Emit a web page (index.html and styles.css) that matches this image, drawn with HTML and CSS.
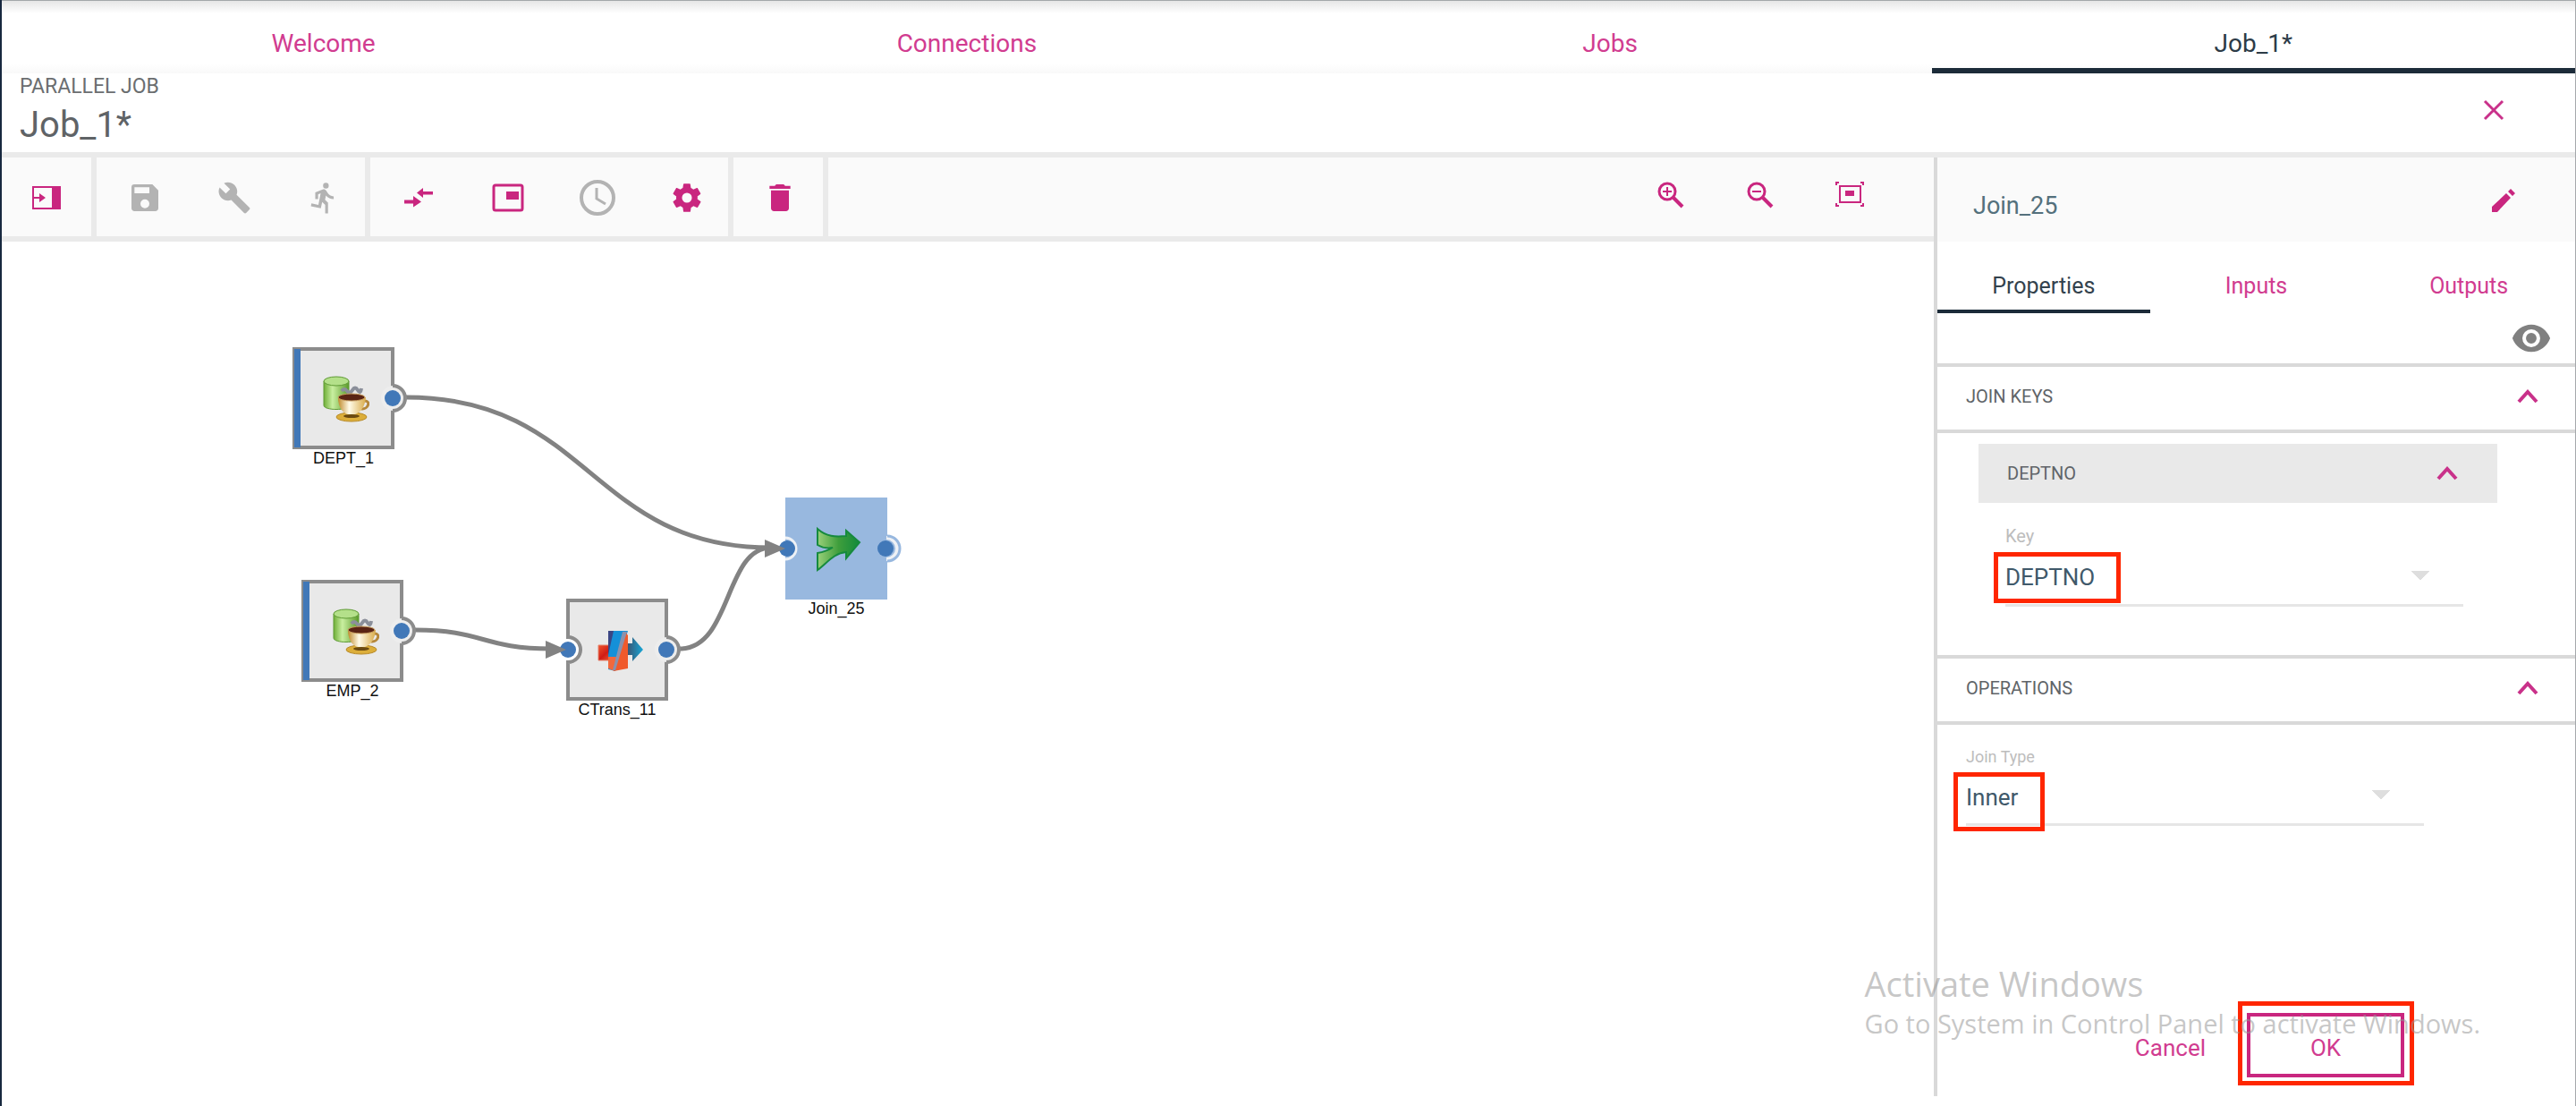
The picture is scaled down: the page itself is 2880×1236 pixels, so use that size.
FILE: index.html
```html
<!DOCTYPE html>
<html lang="en">
<head>
<meta charset="utf-8">
<title>Job_1*</title>
<link rel="stylesheet" href="styles.css">
</head>
<body>
<svg class="defs" aria-hidden="true">
  <defs>
    <linearGradient id="green" x1="0" x2="1" y1="0" y2="0"><stop offset="0" stop-color="#6fae38"/><stop offset=".35" stop-color="#c9efa0"/><stop offset="1" stop-color="#5a9a2a"/></linearGradient>
    <linearGradient id="cream" x1="0" x2="1" y1="0" y2="0"><stop offset="0" stop-color="#c08a2c"/><stop offset=".4" stop-color="#fffbe8"/><stop offset="1" stop-color="#d9ab4a"/></linearGradient>
    <linearGradient id="leaf" x1="0" x2="1" y1="0" y2="0"><stop offset="0" stop-color="#9ad07a"/><stop offset=".5" stop-color="#3f9e3c"/><stop offset="1" stop-color="#128a3c"/></linearGradient>
    <linearGradient id="teal" x1="0" x2="1" y1="0" y2="0"><stop offset="0" stop-color="#3d4a66"/><stop offset="1" stop-color="#16a6d6"/></linearGradient>
    <linearGradient id="red" x1="0" x2="1" y1="0" y2="1"><stop offset="0" stop-color="#f0542c"/><stop offset=".5" stop-color="#d01c16"/><stop offset="1" stop-color="#f26a3c"/></linearGradient>
    <symbol id="chevron" viewBox="0 0 24 16"><path d="M2 14 12 3 22 14" fill="none" stroke="#c9318a" stroke-width="4"/></symbol>
    <symbol id="jdbc" viewBox="0 0 52 52">
      <path d="M1 6v27c0 6 28 6 28 0V6z" fill="url(#green)" stroke="#5f9a35"/>
      <ellipse cx="15" cy="6" rx="14" ry="5" fill="#b4e08a" stroke="#5f9a35"/>
      <path d="M21 17q3-4 6 0t6-1 6 0 4-2" fill="none" stroke="#8b8f9a" stroke-width="4"/>
      <ellipse cx="32" cy="46" rx="17" ry="5" fill="#dcae3a" stroke="#b88a28"/>
      <ellipse cx="32" cy="45" rx="9" ry="2" fill="#6b4a10"/>
      <path d="M46 28c8-1 5 10-3 9" fill="none" stroke="#b5873a" stroke-width="3"/>
      <path d="M17 24c0 12 6 18 11 19h8c6-2 11-8 12-19z" fill="url(#cream)"/>
      <ellipse cx="32" cy="24" rx="15" ry="4" fill="#5a2414" stroke="#caa060"/>
    </symbol>
  </defs>
</svg>

<nav class="tabs">
  <a class="tab" href="#welcome">Welcome</a>
  <a class="tab" href="#connections">Connections</a>
  <a class="tab" href="#jobs">Jobs</a>
  <a class="tab tab-active" href="#job" aria-current="page">Job_1*</a>
</nav>

<header class="job-header">
  <div>
    <p class="job-kind">PARALLEL JOB</p>
    <h1 class="job-name">Job_1*</h1>
  </div>
  <button class="icon-button close" aria-label="Close"><svg width="24" height="24" viewBox="0 0 24 24"><path d="M2 2 22 22M22 2 2 22" stroke="#c9318a" stroke-width="3"/></svg></button>
</header>

<div class="workspace">
  <main class="editor">
    <div class="toolbar">
      <div class="group group-tight">
        <button class="icon-button" aria-label="Toggle palette"><svg width="34" height="28" viewBox="0 0 34 28"><path d="M2 2h30v24H2z" fill="none" stroke="#c9267f" stroke-width="2"/><path d="M23 1h10v26H23zM2 13h7V9l7 5-7 5v-4H2z" fill="#c9267f"/></svg></button>
      </div>
      <div class="group">
        <button class="icon-button" aria-label="Save" disabled><svg width="40" height="40" viewBox="0 0 24 24"><path fill="#b3b3b3" d="M17 3H5a2 2 0 0 0-2 2v14c0 1.100.9 2 2 2h14c1.100 0 2-.9 2-2V7zm-5 16a3 3 0 1 1 0-6 3 3 0 0 1 0 6zm3-10H5V5h10z"/></svg></button>
        <button class="icon-button" aria-label="Compile" disabled><svg width="38" height="38" viewBox="0 0 24 24"><path fill="#b3b3b3" d="m22.700 19-9.100-9.100c.9-2.300.4-5-1.500-6.900-2-2-5-2.400-7.400-1.300L9 6 6 9 1.600 4.700C.4 7.100.9 10.100 2.900 12.100c1.900 1.900 4.600 2.400 6.900 1.500l9.100 9.100c.4.4 1 .4 1.400 0l2.300-2.300c.5-.4.5-1.100.1-1.400z"/></svg></button>
        <button class="icon-button" aria-label="Run" disabled><svg width="38" height="38" viewBox="0 0 24 24"><path fill="#b3b3b3" d="M13.490 5.480a2 2 0 1 0 0-4 2 2 0 0 0 0 4zm-3.600 13.900 1-4.400 2.100 2v6h2v-7.500l-2.100-2 .6-3a7.300 7.300 0 0 0 5.500 2.500v-2c-1.900 0-3.500-1-4.300-2.400l-1-1.600c-.4-.6-1-1-1.700-1-.3 0-.5.1-.8.1l-5.200 2.200v4.700h2v-3.400l1.800-.7-1.600 8.100-4.900-1-.4 2z"/></svg></button>
      </div>
      <div class="group">
        <button class="icon-button" aria-label="Arrange links"><svg width="34" height="24" viewBox="0 0 34 24"><path fill="#c9267f" d="M1 14.500h10V10l9 6.500-9 6V18.500H1zM33 5H22V1l-7 5.500 7 5.500V8.500h11z"/></svg></button>
        <button class="icon-button" aria-label="Overview"><svg width="36" height="32" viewBox="0 0 36 32"><rect x="2" y="2" width="32" height="28" rx="2" fill="none" stroke="#c9267f" stroke-width="3"/><path d="M16 9h14v9H16z" fill="#c9267f"/></svg></button>
        <button class="icon-button" aria-label="Schedule" disabled><svg width="42" height="42" viewBox="0 0 42 42"><circle cx="21" cy="21" r="18" fill="none" stroke="#b3b3b3" stroke-width="4"/><path d="M20 10v12l10 6" fill="none" stroke="#b3b3b3" stroke-width="3"/></svg></button>
        <button class="icon-button" aria-label="Settings"><svg width="38" height="38" viewBox="0 0 24 24"><path fill="#c9267f" fill-rule="evenodd" d="M19.400 13c0-.3.100-.6.100-1s0-.7-.1-1l2.100-1.600c.2-.2.200-.4.100-.6l-2-3.500c-.1-.2-.4-.3-.6-.2l-2.500 1c-.5-.4-1.100-.7-1.700-1l-.4-2.600c0-.3-.2-.5-.4-.5h-4c-.2 0-.4.2-.5.4l-.4 2.700c-.6.200-1.100.6-1.700 1l-2.500-1c-.2-.1-.5 0-.6.200l-2 3.500c-.1.200-.1.500.1.600L4.500 11c0 .3-.1.700-.1 1s0 .7.1 1l-2.100 1.600c-.2.200-.2.400-.1.600l2 3.500c.1.200.4.300.6.200l2.500-1c.5.400 1.100.7 1.700 1l.4 2.700c0 .200.200.4.500.4h4c.2 0 .5-.2.500-.4l.4-2.700c.6-.2 1.100-.6 1.700-1l2.500 1c.2.100.5 0 .6-.2l2-3.500c.1-.2.1-.5-.1-.6zM12 15.500a3.500 3.500 0 1 1 0-7 3.500 3.500 0 0 1 0 7z"/></svg></button>
      </div>
      <div class="group group-delete">
        <button class="icon-button" aria-label="Delete"><svg width="40" height="40" viewBox="0 0 24 24"><path fill="#c9267f" d="M6 19c0 1.100.9 2 2 2h8c1.100 0 2-.9 2-2V7H6zM19 4h-3.500l-1-1h-5l-1 1H5v2h14z"/></svg></button>
      </div>
      <div class="zoom-tools">
        <button class="icon-button" aria-label="Zoom in"><svg width="30" height="30" viewBox="0 0 30 30"><g fill="none" stroke="#c9267f"><circle cx="11" cy="11" r="9" stroke-width="3"/><path d="m18 18 10 10" stroke-width="4"/><path d="M6 11h10M11 6v10" stroke-width="2"/></g></svg></button>
        <button class="icon-button" aria-label="Zoom out"><svg width="30" height="30" viewBox="0 0 30 30"><g fill="none" stroke="#c9267f"><circle cx="11" cy="11" r="9" stroke-width="3"/><path d="m18 18 10 10" stroke-width="4"/><path d="M6 11h10" stroke-width="2"/></g></svg></button>
        <button class="icon-button" aria-label="Fit to window"><svg width="34" height="34" viewBox="0 0 34 34"><g fill="none" stroke="#c9267f" stroke-width="2"><path d="M6 7h23v18H6zM2 6V3h3M29 3h3v3M2 26v3h3M29 29h3v-3"/></g><path d="M12 12h10v6H12z" fill="#c9267f"/></svg></button>
      </div>
    </div>

    <div class="canvas">
      <svg class="links" width="1100" height="600" viewBox="2 270 1100 600">
        <g fill="none" stroke="#828282" stroke-width="5">
          <path d="M454 444C660 444 660 612 862 612"/>
          <path d="M464 704C540 704 540 725 616 725"/>
          <path d="M760 725C818 725 810 612 862 612"/>
        </g>
      </svg>
      <div class="node node-dept">
        <svg width="136" height="114" viewBox="0 0 136 114"><path d="M2 2h110v110H2z" fill="#e9e9e9" stroke="#8c8c8c" stroke-width="4"/><path d="M2 2h7v110H2z" fill="#4178b8"/><circle cx="113" cy="57" r="14" fill="#ededed"/><path d="M112 43a14 14 0 0 1 0 28" fill="none" stroke="#8c8c8c" stroke-width="4"/><circle cx="112" cy="57" r="9" fill="#4178b8"/><use href="#jdbc" x="34" y="32" width="52" height="52"/></svg>
        <span class="node-label">DEPT_1</span>
      </div>
      <div class="node node-emp">
        <svg width="136" height="114" viewBox="0 0 136 114"><path d="M2 2h110v110H2z" fill="#e9e9e9" stroke="#8c8c8c" stroke-width="4"/><path d="M2 2h7v110H2z" fill="#4178b8"/><circle cx="113" cy="57" r="14" fill="#ededed"/><path d="M112 43a14 14 0 0 1 0 28" fill="none" stroke="#8c8c8c" stroke-width="4"/><circle cx="112" cy="57" r="9" fill="#4178b8"/><use href="#jdbc" x="35" y="32" width="52" height="52"/></svg>
        <span class="node-label">EMP_2</span>
      </div>
      <div class="node node-ctrans">
        <svg width="136" height="114" viewBox="0 0 136 114"><path d="M2 2h110v110H2V71a14 14 0 0 0 0-28z" fill="#e9e9e9" stroke="#8c8c8c" stroke-width="4"/><circle cx="113" cy="57" r="14" fill="#ededed"/><path d="M112 43a14 14 0 0 1 0 28" fill="none" stroke="#8c8c8c" stroke-width="4"/><circle cx="2" cy="57" r="9" fill="#4178b8"/><circle cx="112" cy="57" r="9" fill="#4178b8"/>
          <path d="M-23 47 0 57 -23 67z" fill="#828282"/>
          <path d="M66 50h8v-7l12 14-12 13v-7h-8z" fill="url(#teal)"/><path d="M36 52h18v17H36z" fill="url(#red)" stroke="#e3836c"/><path d="M47 36h22l-14 45-8-2z" fill="#1590d8"/><path d="M47 36h6l-6 27z" fill="#3b4684"/><path d="M47 65h11l-4 16-7-3z" fill="#f2683c"/><path d="M66 37l3 4v37l-16 3z" fill="#f05a2c"/><path d="M63 37h5L55 80h-3z" fill="#8b91ac"/></svg>
        <span class="node-label">CTrans_11</span>
      </div>
      <div class="node node-join">
        <svg width="136" height="114" viewBox="0 0 136 114"><path d="M0 0h114v114H0z" fill="#98b8df"/><path d="M0 45a12 12 0 0 1 0 24" fill="#98b8df" stroke="#eef1f5" stroke-width="3"/><path d="M113 45a12 12 0 0 1 0 24" fill="#98b8df" stroke="#eef1f5" stroke-width="4"/><path d="M114 43a14 14 0 0 1 0 28" fill="none" stroke="#98b8df" stroke-width="3"/><circle cx="2" cy="57" r="9" fill="#4178b8"/><circle cx="112" cy="57" r="9" fill="#4178b8"/><path d="M-23 47 0 57 -23 67z" fill="#828282"/><path d="M36 35c10 9 20 9 32 8v-6l15 13-15 18v-7C54 62 46 74 36 81V62c6-1 12-3 17-6-6 1-12 0-17-3z" fill="url(#leaf)" stroke="#168a3e" stroke-width="2"/></svg>
        <span class="node-label">Join_25</span>
      </div>
    </div>
  </main>

  <aside class="panel">
    <div class="panel-header">
      <h2 class="panel-title">Join_25</h2>
      <button class="icon-button edit" aria-label="Rename"><svg width="28" height="28" viewBox="0 0 28 28"><path fill="#c9267f" d="M1 21 17 6l5 5L7 27H1zM19 4l3-3 5 5-3 3z"/></svg></button>
    </div>
    <nav class="panel-tabs">
      <a class="panel-tab panel-tab-active" href="#properties">Properties</a>
      <a class="panel-tab" href="#inputs">Inputs</a>
      <a class="panel-tab" href="#outputs">Outputs</a>
    </nav>
    <div class="view-row">
      <button class="icon-button view" aria-label="Show all"><svg width="46" height="46" viewBox="0 0 24 24"><path fill="#808080" d="M12 4C7 4 2.700 7.300 1 12c1.700 4.700 6 8 11 8s9.300-3.300 11-8c-1.700-4.700-6-8-11-8zm0 13.200a5.200 5.200 0 1 1 0-10.400 5.200 5.200 0 0 1 0 10.400zm0-8.300a3.100 3.100 0 1 0 0 6.200 3.100 3.100 0 0 0 0-6.200z"/></svg></button>
    </div>

    <section class="section section-keys">
      <h3 class="section-head"><button class="section-button">JOIN KEYS<svg width="24" height="16"><use href="#chevron"/></svg></button></h3>
      <div class="section-body">
        <button class="key-bar">DEPTNO<svg width="24" height="16"><use href="#chevron"/></svg></button>
        <div class="field field-key">
          <label class="field-label" for="key">Key</label>
          <select class="field-select" id="key"><option>DEPTNO</option></select>
          <span class="mark mark-key"></span>
        </div>
      </div>
    </section>

    <section class="section">
      <h3 class="section-head"><button class="section-button">OPERATIONS<svg width="24" height="16"><use href="#chevron"/></svg></button></h3>
      <div class="section-body">
        <div class="field field-type">
          <label class="field-label field-label-small" for="join-type">Join Type</label>
          <select class="field-select" id="join-type"><option>Inner</option></select>
          <span class="mark mark-type"></span>
        </div>
      </div>
    </section>

    <div class="actions">
      <button class="cancel">Cancel</button>
      <div class="ok-wrap">
        <button class="ok">OK</button>
        <span class="mark mark-ok"></span>
      </div>
    </div>
  </aside>
</div>

<div class="watermark">
  <p class="watermark-title">Activate Windows</p>
  <p class="watermark-text">Go to System in Control Panel to activate Windows.</p>
</div>
</body>
</html>
```
FILE: styles.css
```css
* {
  box-sizing: border-box;
}

body {
  display: flex;
  flex-direction: column;
  position: relative;
  min-height: 100vh;
  margin: 0;
  border-left: 2px solid #17283f;
  border-right: 1px solid #a5a8ab;
  background: #fff;
  color: #5f6366;
  font-family: Roboto, "Liberation Sans", sans-serif;
  font-size: 26px;
}

h1, h2, h3, p {
  margin: 0;
  font-weight: 400;
}

button {
  padding: 0;
  border: 0;
  background: none;
  color: inherit;
  font: inherit;
}

svg {
  display: block;
}

.defs {
  position: absolute;
  width: 0;
  height: 0;
}

/* Top navigation */
.tabs {
  display: grid;
  grid-template-columns: repeat(4, 1fr);
  height: 82px;
  border-top: 1px solid #a3a7aa;
  background: linear-gradient(#e6e6e6, #fff 14px, #fff 70px, #f9f9f9);
}

.tab {
  padding-top: 21px;
  border-bottom: 6px solid transparent;
  color: #d13c90;
  font-size: 28px;
  line-height: 54px;
  text-align: center;
  text-decoration: none;
}

.tab-active {
  border-bottom-color: #1c2b39;
  color: #2c3b47;
}

.job-header {
  display: flex;
  justify-content: space-between;
  height: 88px;
  padding: 0 79px 0 20px;
}

.job-kind {
  padding-top: 2px;
  color: #6b6e70;
  font-size: 23px;
  line-height: 26px;
}

.job-name {
  font-size: 40px;
  line-height: 60px;
}

.close {
  align-self: center;
  padding-bottom: 6px;
}

/* Editor and toolbar */
.workspace {
  display: flex;
  flex: 1;
  border-top: 6px solid #eaeaea;
}

.editor {
  display: flex;
  flex: 1;
  flex-direction: column;
  min-width: 0;
}

.toolbar {
  display: flex;
  height: 94px;
  border-bottom: 6px solid #eaeaea;
  background: #fafafa;
}

.group {
  display: flex;
  border-right: 6px solid #eaeaea;
}

.toolbar .icon-button {
  display: grid;
  place-items: center;
  width: 100px;
  padding: 2px 0 0 8px;
}

.toolbar .group-tight .icon-button {
  padding-left: 0;
}

.toolbar .group-delete .icon-button {
  padding-left: 4px;
}

.zoom-tools {
  display: flex;
  margin-left: auto;
  padding: 0 48px 6px 0;
}

/* Job diagram */
.canvas {
  position: relative;
  flex: 1;
}

.links {
  position: absolute;
  top: 0;
  left: 0;
}

.node {
  position: absolute;
  width: 114px;
}

.node svg {
  overflow: visible;
}

.node-dept { left: 325px; top: 118px; }
.node-emp { left: 335px; top: 378px; }
.node-ctrans { left: 631px; top: 399px; }
.node-join { left: 876px; top: 286px; }

.node-label {
  display: block;
  color: #111;
  font-family: "Liberation Sans", sans-serif;
  font-size: 18px;
  line-height: 20px;
  text-align: center;
}

/* Properties panel */
.panel {
  display: flex;
  flex: 0 0 717px;
  flex-direction: column;
  margin-bottom: 11px;
  border-left: 4px solid #d9d9d9;
}

.panel-header {
  display: flex;
  align-items: center;
  justify-content: space-between;
  height: 94px;
  padding: 14px 66px 0 40px;
  background: #fafafa;
}

.panel-title {
  color: #54707c;
  font-size: 27px;
}

.edit {
  padding-bottom: 12px;
}

.panel-tabs {
  display: grid;
  grid-template-columns: repeat(3, 1fr);
}

.panel-tab {
  padding-top: 24px;
  border-bottom: 4px solid transparent;
  color: #d13c90;
  font-size: 25px;
  line-height: 52px;
  text-align: center;
  text-decoration: none;
}

.panel-tab-active {
  border-bottom-color: #1c2b39;
  color: #33424d;
}

.view-row {
  display: flex;
  align-items: flex-start;
  justify-content: flex-end;
  height: 56px;
  padding: 5px 26px 0 0;
}

.section {
  border-top: 4px solid #d9d9d9;
}

.section-keys {
  height: 326px;
}

.section-button {
  display: flex;
  align-items: center;
  justify-content: space-between;
  width: 100%;
  height: 74px;
  padding: 0 41px 4px 32px;
  border-bottom: 4px solid #d9d9d9;
  color: #606468;
}

.section-head,
.key-bar {
  font-size: 20px;
}

.key-bar {
  display: flex;
  align-items: center;
  justify-content: space-between;
  width: 580px;
  height: 66px;
  margin: 12px 0 0 46px;
  padding: 0 44px 0 32px;
  background: #e9e9e9;
  color: #606468;
}

.field {
  position: relative;
  width: 512px;
}

.field-key {
  margin: 24px 0 0 76px;
}

.field-type {
  margin: 23px 0 0 32px;
}

.field-label {
  display: block;
  color: #bdbdbd;
  font-size: 20px;
  line-height: 26px;
}

.field-label-small {
  font-size: 18px;
}

.field-select {
  display: block;
  width: 100%;
  height: 66px;
  padding: 2px 0 0;
  appearance: none;
  border: 0;
  border-bottom: 3px solid #e6e6e6;
  border-radius: 0;
  background: linear-gradient(to bottom left, #dedede 50%, transparent 52%) 454px 26px / 10px 10px no-repeat,
    linear-gradient(to bottom right, #dedede 50%, transparent 52%) 464px 26px / 10px 10px no-repeat;
  color: #40596a;
  font: inherit;
}

.field-type .field-select {
  height: 64px;
  background-position: 454px 24px, 464px 24px;
}

/* Highlight frames around the chosen values */
.mark {
  position: absolute;
  border: 5px solid #ff2600;
  pointer-events: none;
}

.mark-key {
  top: 31px;
  left: -13px;
  width: 142px;
  height: 57px;
}

.mark-type {
  top: 30px;
  left: -14px;
  width: 102px;
  height: 66px;
}

.mark-ok {
  inset: -13px -11px -9px -10px;
}

.actions {
  display: flex;
  gap: 46px;
  justify-content: flex-end;
  margin-top: auto;
  padding: 0 191px 21px 0;
}

.cancel,
.ok {
  padding-top: 6px;
  color: #d13c90;
}

.ok-wrap {
  position: relative;
}

.ok {
  width: 176px;
  height: 72px;
  border: 4px solid #c9267f;
}

.watermark {
  position: absolute;
  right: 106px;
  bottom: 72px;
  color: rgba(150, 150, 150, 0.55);
  font-family: "Open Sans", "Noto Sans", sans-serif;
  pointer-events: none;
}

.watermark-title {
  font-size: 38px;
  line-height: 50px;
}

.watermark-text {
  font-size: 29px;
  line-height: 40px;
}
```
